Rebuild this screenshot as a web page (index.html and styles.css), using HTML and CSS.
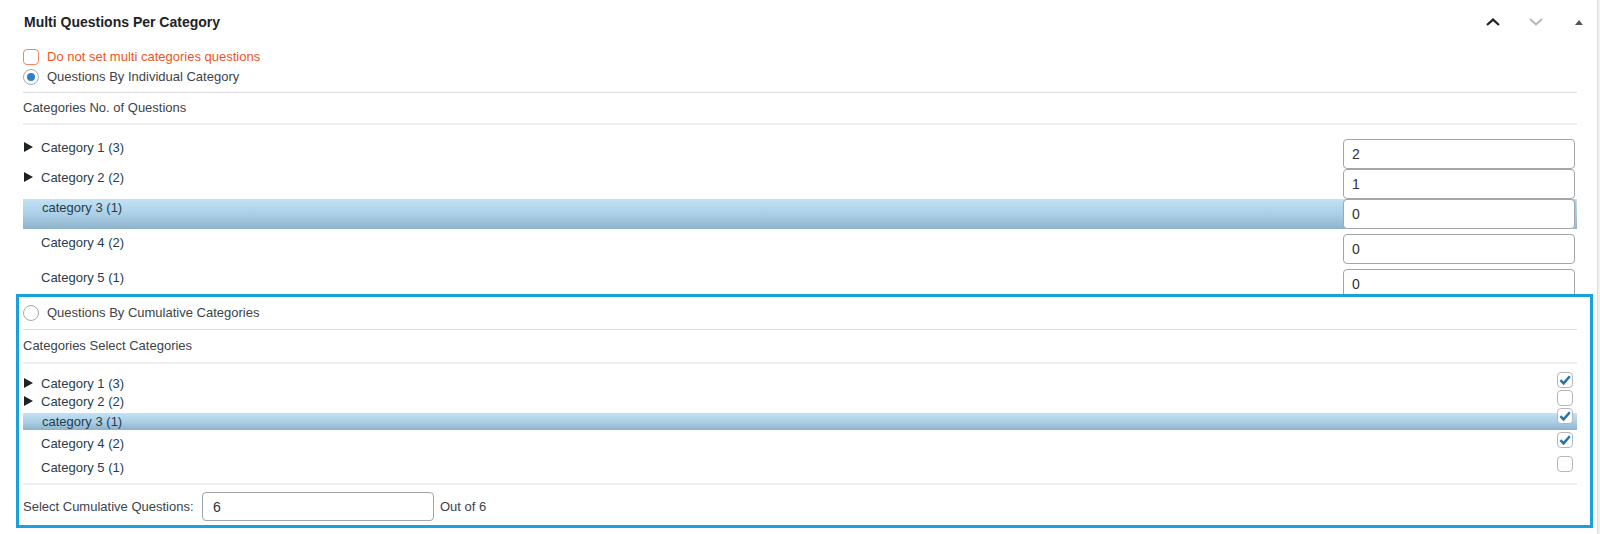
FILE: index.html
```html
<!DOCTYPE html>
<html lang="en">
<head>
<meta charset="utf-8">
<title>Multi Questions Per Category</title>
<link rel="stylesheet" href="styles.css">
</head>
<body>
<div class="panel">
  <div class="panel-head">
    <h2 class="panel-title">Multi Questions Per Category</h2>
    <div class="head-actions">
      <span class="hbtn"><svg width="14" height="8" viewBox="0 0 14 8"><path d="M1 7L7 1.6L13 7" stroke="#1d2327" stroke-width="2.2" fill="none"/></svg></span>
      <span class="hbtn"><svg width="14" height="8" viewBox="0 0 14 8"><path d="M1 1L7 6.4L13 1" stroke="#b4b6b9" stroke-width="2" fill="none"/></svg></span>
      <span class="hbtn last"><svg width="8" height="5" viewBox="0 0 8 5"><path d="M0 5L4 0L8 5Z" fill="#50575e"/></svg></span>
    </div>
  </div>

  <div class="panel-body">
    <div class="opt-row opt-warn">
      <span class="cbox cbox-warn"></span>
      <span>Do not set multi categories questions</span>
    </div>
    <div class="opt-row">
      <span class="radio radio-on"><span class="radio-dot"></span></span>
      <span>Questions By Individual Category</span>
    </div>
    <div class="rule"></div>
    <div class="sub-head">Categories No. of Questions</div>
    <div class="rule rule-soft"></div>

    <div class="num-list">
      <div class="num-row">
        <div class="cat"><span class="arrow"><svg width="9" height="10" viewBox="0 0 9 10"><path d="M0 0L9 5L0 10Z" fill="#1d2327"/></svg></span>Category 1 (3)</div>
        <input class="num-input" type="text" value="2">
      </div>
      <div class="num-row">
        <div class="cat"><span class="arrow"><svg width="9" height="10" viewBox="0 0 9 10"><path d="M0 0L9 5L0 10Z" fill="#1d2327"/></svg></span>Category 2 (2)</div>
        <input class="num-input" type="text" value="1">
      </div>
      <div class="num-row selected">
        <div class="cat"><span class="arrow"></span>category 3 (1)</div>
        <input class="num-input focus" type="text" value="0">
      </div>
      <div class="num-row spaced">
        <div class="cat"><span class="arrow"></span>Category 4 (2)</div>
        <input class="num-input" type="text" value="0">
      </div>
      <div class="num-row spaced">
        <div class="cat"><span class="arrow"></span>Category 5 (1)</div>
        <input class="num-input" type="text" value="0">
      </div>
    </div>

    <div class="cumulative">
      <div class="opt-row cum-radio">
        <span class="radio"></span>
        <span>Questions By Cumulative Categories</span>
      </div>
      <div class="rule"></div>
      <div class="sub-head sub-head-b">Categories Select Categories</div>
      <div class="rule rule-soft"></div>

      <div class="sel-list">
        <div class="sel-row r1">
          <div class="cat"><span class="arrow"><svg width="9" height="10" viewBox="0 0 9 10"><path d="M0 0L9 5L0 10Z" fill="#1d2327"/></svg></span>Category 1 (3)</div>
          <span class="cbox on"><svg width="14" height="14" viewBox="0 0 14 14"><path d="M2.4 7.2L5.6 10.4L11.8 3.2" stroke="#2271b1" stroke-width="2.4" fill="none"/></svg></span>
        </div>
        <div class="sel-row r2">
          <div class="cat"><span class="arrow"><svg width="9" height="10" viewBox="0 0 9 10"><path d="M0 0L9 5L0 10Z" fill="#1d2327"/></svg></span>Category 2 (2)</div>
          <span class="cbox"></span>
        </div>
        <div class="sel-row r3 selected">
          <div class="cat"><span class="arrow"></span>category 3 (1)</div>
          <span class="cbox on"><svg width="14" height="14" viewBox="0 0 14 14"><path d="M2.4 7.2L5.6 10.4L11.8 3.2" stroke="#2271b1" stroke-width="2.4" fill="none"/></svg></span>
        </div>
        <div class="sel-row r4">
          <div class="cat"><span class="arrow"></span>Category 4 (2)</div>
          <span class="cbox on"><svg width="14" height="14" viewBox="0 0 14 14"><path d="M2.4 7.2L5.6 10.4L11.8 3.2" stroke="#2271b1" stroke-width="2.4" fill="none"/></svg></span>
        </div>
        <div class="sel-row r5">
          <div class="cat"><span class="arrow"></span>Category 5 (1)</div>
          <span class="cbox"></span>
        </div>
      </div>
      <div class="rule rule-soft end"></div>

      <div class="cum-foot">
        <label class="foot-label">Select Cumulative Questions:</label>
        <input class="foot-input" type="text" value="6">
        <span class="foot-out">Out of 6</span>
      </div>
    </div>
  </div>
</div>
</body>
</html>
```

FILE: styles.css
```css
html {
  background: #f0f0f1;
}
body {
  margin: 0;
  font-family: "Liberation Sans", Arial, sans-serif;
  font-size: 13px;
  color: #3c434a;
}
.panel {
  width: 1597px;
  height: 534px;
  background: #ffffff;
  border-right: 1px solid #dcdcde;
  overflow: hidden;
}
.panel-head {
  display: flex;
  align-items: center;
  height: 44px;
  padding-left: 24px;
}
.panel-title {
  flex: 1;
  margin: 0;
  font-size: 14px;
  font-weight: 600;
  color: #1d2327;
  line-height: 20px;
}
.head-actions {
  display: flex;
  gap: 7px;
  align-items: center;
}
.hbtn {
  width: 36px;
  height: 36px;
  display: flex;
  align-items: center;
  justify-content: center;
}
.panel-body {
  padding: 4px 20px 0 23px;
}
.opt-row {
  display: flex;
  align-items: flex-start;
  gap: 8px;
  height: 18px;
  line-height: 18px;
  color: #3c434a;
}
.opt-row + .opt-row {
  margin-top: 2px;
}
.opt-warn {
  color: #f0551f;
}
.cbox {
  width: 16px;
  height: 16px;
  box-sizing: border-box;
  border: 1px solid #b5b7ba;
  border-radius: 4px;
  background: #fff;
  display: flex;
  align-items: center;
  justify-content: center;
  flex: none;
}
.opt-row .cbox,
.opt-row .radio {
  margin-top: 1px;
}
.cbox-warn {
  border-color: #f08564;
}
.radio {
  width: 16px;
  height: 16px;
  box-sizing: border-box;
  border: 1px solid #a7aaad;
  border-radius: 50%;
  background: #fff;
  display: flex;
  align-items: center;
  justify-content: center;
  flex: none;
}
.radio-dot {
  width: 8px;
  height: 8px;
  border-radius: 50%;
  background: #2f7fc8;
}
.rule {
  height: 1px;
  background: #dcdcde;
  margin-top: 6px;
}
.panel-body .rule-soft {
  height: 2px;
  background: #eeeeef;
  margin-top: 0;
}
.sub-head {
  height: 30px;
  line-height: 30px;
  color: #3c434a;
}
.num-list {
  height: 169px;
  overflow: hidden;
  padding-top: 14px;
  box-sizing: border-box;
}
.num-row {
  display: flex;
  align-items: flex-start;
  height: 30px;
}
.num-row.spaced {
  margin-top: 5px;
}
.cat {
  flex: 1;
  display: flex;
  align-items: center;
  line-height: 20px;
  color: #273d4e;
}
.num-row .cat {
  height: 17px;
  line-height: 17px;
}
.arrow {
  width: 18px;
  flex: none;
  display: flex;
  align-items: center;
  padding-left: 1px;
  box-sizing: border-box;
  margin-top: -2px;
}
.selected {
  background: linear-gradient(#c2e2f5, #a9cde5 55%, #8db2cb);
}
.num-row.selected .cat {
  padding-left: 1px;
}
.num-input {
  width: 232px;
  height: 30px;
  box-sizing: border-box;
  margin: 0 2px 0 0;
  padding: 0 8px;
  border: 1px solid #a3a5a9;
  border-radius: 4px;
  background: #fff;
  font-family: "Liberation Sans", Arial, sans-serif;
  font-size: 14px;
  color: #2c3338;
  outline: none;
}
.num-input.focus {
  box-shadow: 1px 0 0 #9cc7e6;
}
.cumulative {
  margin: 0 -16px 0 -7px;
  border: 3px solid #1aa1dc;
  padding: 0 13px 0 4px;
  background: #fff;
  height: 234px;
  box-sizing: border-box;
}
.cum-radio {
  margin-top: 7px;
}
.cumulative .rule {
  margin-top: 7px;
}
.cumulative .rule-soft {
  margin-top: 0;
}
.sub-head-b {
  height: 32px;
  line-height: 32px;
}
.sel-list {
  padding-top: 11px;
}
.sel-row {
  display: flex;
  align-items: flex-start;
  height: 18px;
}
.sel-row .cat {
  line-height: 18px;
  height: 18px;
}
.sel-row .cbox {
  margin: -3px 4px 0 0;
}
.sel-row.r3 {
  height: 17px;
  margin-top: 2px;
}
.sel-row.r3 .cat {
  height: 17px;
  line-height: 17px;
  padding-left: 1px;
}
.sel-row.r3 .cbox {
  margin-top: -5px;
}
.sel-row.r4 {
  margin-top: 5px;
}
.sel-row.r5 {
  margin-top: 6px;
}
.cumulative .rule-soft.end {
  margin-top: 6px;
}
.cum-foot {
  display: flex;
  align-items: center;
  padding-top: 7px;
}
.foot-label {
  width: 173px;
  flex: none;
  color: #3c434a;
}
.foot-input {
  width: 232px;
  height: 29px;
  box-sizing: border-box;
  margin: 0 6px 0 6px;
  padding: 0 10px;
  border: 1px solid #a3a5a9;
  border-radius: 4px;
  font-family: "Liberation Sans", Arial, sans-serif;
  font-size: 14px;
  color: #2c3338;
  outline: none;
}
.foot-out {
  color: #3c434a;
}
```
